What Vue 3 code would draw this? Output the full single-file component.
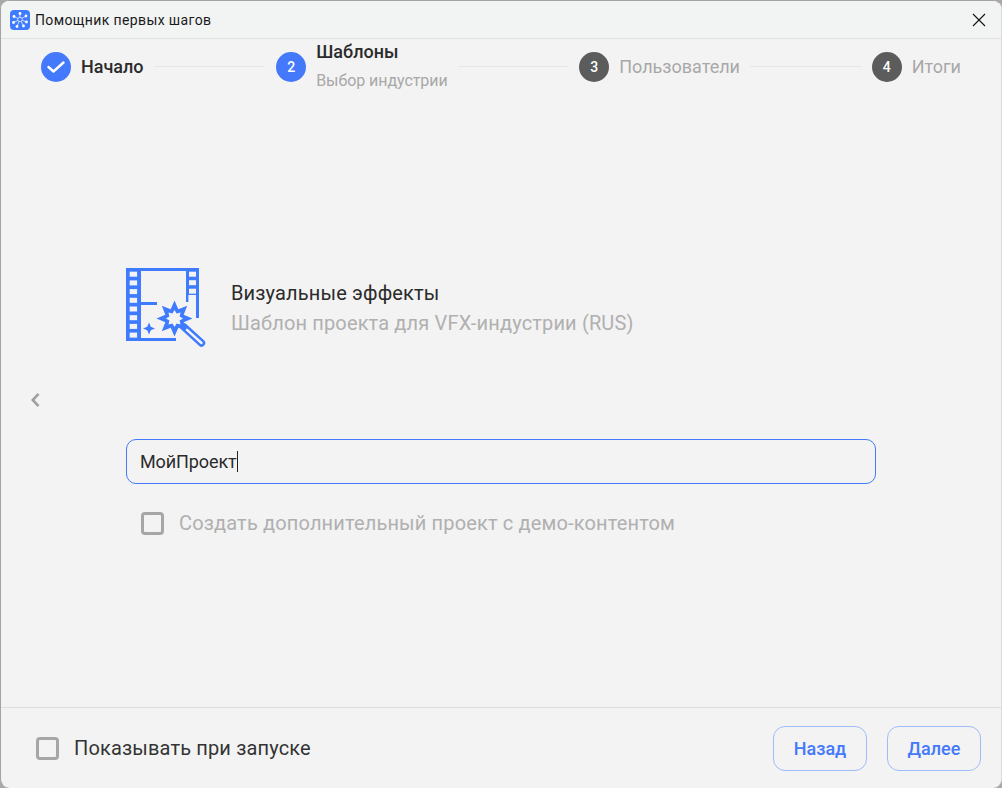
<script setup>
const steps = [
  { n: '3', label: 'Пользователи' },
  { n: '4', label: 'Итоги' },
]
const leftHoles = [0, 1, 2, 3, 4, 5, 6, 7].map((i) => 3.7 + i * 8.7)
const rightHoles = [0, 1, 2].map((i) => 3.7 + i * 8.5)

function starPoints(cx, cy, outer, inner) {
  const pts = []
  for (let i = 0; i < 16; i++) {
    const r = i % 2 === 0 ? outer : inner
    const a = (Math.PI / 8) * i - Math.PI / 2
    pts.push(`${(cx + r * Math.cos(a)).toFixed(1)},${(cy + r * Math.sin(a)).toFixed(1)}`)
  }
  return pts.join(' ')
}
const starOuter = starPoints(48.5, 50.5, 18, 10)
const starInner = starPoints(48.5, 50.5, 8.5, 5.5)
</script>

<template>
  <div class="window">
    <header class="titlebar">
      <svg class="logo" width="20" height="20" viewBox="0 0 20 20">
        <rect width="20" height="20" rx="4" fill="#3f7bff" />
        <path d="M10 9.5 L10 3.5 M10 9.5 L4 6.5 M10 9.5 L16 6 M10 9.5 L3.5 12.5 M10 9.5 L16.5 12 M10 9.5 L7 16.5 M10 9.5 L13.5 16" stroke="#fff" stroke-width="0.7" fill="none" />
        <circle cx="10" cy="9.5" r="2.2" fill="#3f7bff" stroke="#dfe9ff" stroke-width="0.8" />
        <g fill="#fff">
          <circle cx="10" cy="3.5" r="1.4" />
          <circle cx="4" cy="6.5" r="1.4" />
          <circle cx="16" cy="6" r="1.4" />
          <circle cx="3.5" cy="12.5" r="1.4" />
          <circle cx="16.5" cy="12" r="1.4" />
          <circle cx="7" cy="16.5" r="1.4" />
          <circle cx="13.5" cy="16" r="1.4" />
        </g>
      </svg>
      <span class="title">Помощник первых шагов</span>
      <svg class="close" width="14" height="14" viewBox="0 0 14 14">
        <path d="M1 1 L13 13 M13 1 L1 13" stroke="#111" stroke-width="1.1" fill="none" />
      </svg>
    </header>

    <nav class="stepper">
      <div class="step">
        <span class="dot blue">
          <svg width="18" height="12" viewBox="0 0 18 12">
            <path d="M1.5 6 L6.5 10.5 L16.5 1.5" stroke="#fff" stroke-width="2.4" fill="none" stroke-linecap="round" stroke-linejoin="round" />
          </svg>
        </span>
        <span class="label active">Начало</span>
      </div>
      <i class="line first"></i>
      <div class="step">
        <span class="dot blue">2</span>
        <span class="stack">
          <span class="label active">Шаблоны</span>
          <span class="sub">Выбор индустрии</span>
        </span>
      </div>
      <i class="line"></i>
      <template v-for="(s, i) in steps" :key="s.n">
        <div class="step">
          <span class="dot grey">{{ s.n }}</span>
          <span class="label">{{ s.label }}</span>
        </div>
        <i v-if="i === 0" class="line"></i>
      </template>
    </nav>

    <main class="content">
      <button class="back" aria-label="Назад">
        <svg width="12" height="18" viewBox="0 0 12 18">
          <path d="M9.5 2.8 L3.8 9 L9.5 15.2" stroke="#a0a0a0" stroke-width="2.6" fill="none" />
        </svg>
      </button>
      <div class="form">
        <div class="template">
          <svg class="tpl-icon" width="82" height="82" viewBox="0 0 82 82">
            <rect x="0" y="0" width="15" height="73" fill="#3f7bff" />
            <rect v-for="y in leftHoles" :key="y" x="3.7" :y="y" width="7.4" height="5" fill="#f3f3f3" />
            <rect x="60" y="0" width="13" height="27" fill="#3f7bff" />
            <rect v-for="y in rightHoles" :key="y" x="63" :y="y" width="7" height="5" fill="#f3f3f3" />
            <g fill="none" stroke="#3f7bff" stroke-width="3">
              <path d="M14 1.5 H61" />
              <path d="M14 71.5 H50" />
              <path d="M15 35.5 H31" />
              <path d="M71.5 26 V50" />
              <path d="M61.2 26 V34" stroke-width="2.4" />
            </g>
            <polygon :points="starOuter" fill="#3f7bff" />
            <polygon :points="starInner" fill="#f3f3f3" />
            <path d="M58 59 L75.5 75" stroke="#3f7bff" stroke-width="7.4" stroke-linecap="round" fill="none" />
            <path d="M61 61.8 L75.5 75" stroke="#f3f3f3" stroke-width="2.4" stroke-linecap="round" fill="none" />
            <path d="M23 54.5 L24.8 58.8 L29 60.5 L24.8 62.2 L23 66.5 L21.2 62.2 L17 60.5 L21.2 58.8 Z" fill="#3f7bff" />
          </svg>
          <div class="tpl-text">
            <div class="tpl-name">Визуальные эффекты</div>
            <div class="tpl-desc">Шаблон проекта для VFX-индустрии (RUS)</div>
          </div>
        </div>
        <div class="input">МойПроект<i class="caret"></i></div>
        <label class="check demo">
          <span class="box"></span>
          <span>Создать дополнительный проект с демо-контентом</span>
        </label>
      </div>
    </main>

    <footer class="footer">
      <label class="check startup">
        <span class="box"></span>
        <span>Показывать при запуске</span>
      </label>
      <div class="actions">
        <button class="btn">Назад</button>
        <button class="btn">Далее</button>
      </div>
    </footer>
  </div>
</template>

<style>
html, body { margin: 0; background: #a9a9a9; }
</style>

<style scoped>
.window {
  width: 1002px;
  height: 788px;
  box-sizing: border-box;
  display: flex;
  flex-direction: column;
  background: #f3f3f3;
  border: 1px solid #a3a3a3;
  border-right-color: #dcdcdc;
  border-bottom: 0;
  border-radius: 9px;
  overflow: hidden;
  font-family: Roboto, sans-serif;
  color: #2b2b2b;
}
.titlebar {
  height: 37px;
  flex: none;
  display: flex;
  align-items: center;
  padding: 0 15px 0 9px;
  border-bottom: 1px solid #e0e0e0;
  background: #f2f4f4;
}
.logo { flex: none; }
.title {
  margin-left: 5px;
  font-size: 14px;
  letter-spacing: 0.38px;
  color: #1a1a1a;
}
.close { margin-left: auto; }

.stepper {
  height: 55px;
  flex: none;
  display: flex;
  align-items: center;
  padding: 0 40px;
}
.step {
  display: flex;
  align-items: center;
  gap: 10px;
  flex: none;
}
.dot {
  width: 30px;
  height: 30px;
  border-radius: 50%;
  display: flex;
  align-items: center;
  justify-content: center;
  color: #fff;
  font-size: 14px;
  font-weight: 500;
}
.blue { background: #4479fb; }
.grey { background: #5c5c5c; }
.label {
  font-size: 18px;
  color: #a8a8a8;
  white-space: nowrap;
}
.label.active {
  font-weight: 500;
  color: #2b2b2b;
}
.stack {
  display: flex;
  flex-direction: column;
  gap: 9px;
  margin-bottom: 2px;
}
.sub {
  font-size: 16px;
  line-height: 19px;
  letter-spacing: -0.07px;
  color: #a8a8a8;
}
.line {
  height: 1px;
  flex: 1;
  margin: 0 10px;
  background: #e6e6e6;
  display: block;
}
.line.first { margin-right: 11px; }

.content {
  flex: 1;
  position: relative;
  padding: 174px 125px 0;
}
.back {
  position: absolute;
  left: 28px;
  top: 297px;
  padding: 0;
  border: 0;
  background: none;
  display: flex;
}
.form { width: 750px; }
.template {
  display: flex;
  align-items: flex-start;
  height: 171px;
}
.tpl-icon { flex: none; }
.tpl-text { margin: 13px 0 0 23px; }
.tpl-name {
  font-size: 20px;
  line-height: 24px;
  letter-spacing: 0.15px;
  color: #2b2b2b;
}
.tpl-desc {
  margin-top: 6px;
  font-size: 20px;
  line-height: 24px;
  letter-spacing: 0.15px;
  color: #b0b0b0;
}
.input {
  height: 45px;
  box-sizing: border-box;
  border: 1px solid #4479fb;
  border-radius: 10px;
  padding-left: 13px;
  display: flex;
  align-items: center;
  font-size: 18px;
  letter-spacing: -0.1px;
  color: #2b2b2b;
}
.caret {
  width: 1px;
  height: 21px;
  background: #222;
}
.check {
  display: flex;
  align-items: center;
  font-size: 20px;
  letter-spacing: 0.15px;
}
.box {
  width: 23px;
  height: 23px;
  box-sizing: border-box;
  border: 3px solid #a6a6a6;
  border-radius: 4px;
  flex: none;
}
.demo {
  margin: 27px 0 0 15px;
  gap: 15px;
  color: #b0b0b0;
}
.startup {
  gap: 15px;
  color: #333;
}
.footer {
  height: 81px;
  flex: none;
  box-sizing: border-box;
  border-top: 1px solid #dedede;
  display: flex;
  align-items: center;
  justify-content: space-between;
  padding: 0 20px 0 35px;
}
.actions { display: flex; gap: 20px; }
.btn {
  width: 94px;
  height: 45px;
  border: 1px solid #9dbcfa;
  border-radius: 12px;
  background: transparent;
  color: #4479fb;
  font-family: Roboto, sans-serif;
  font-size: 18px;
  font-weight: 500;
}
</style>
